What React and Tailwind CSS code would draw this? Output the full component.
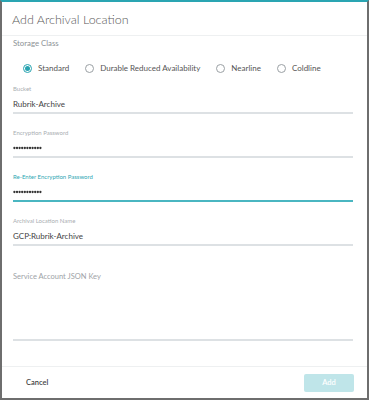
const OPTIONS = ["Standard", "Durable Reduced Availability", "Nearline", "Coldline"];

function Radio({ label, checked }) {
  return (
    <label className="flex items-center gap-[6px] whitespace-nowrap">
      <span
        className={`w-[9px] h-[9px] rounded-full border flex items-center justify-center ${
          checked ? "border-[#27a3b0]" : "border-[#9aa0a4]"
        }`}
      >
        {checked && <span className="w-[5px] h-[5px] rounded-full bg-[#27a3b0]" />}
      </span>
      <span className="text-[8px] text-[#555]">{label}</span>
    </label>
  );
}

function Dots() {
  return (
    <svg width="29" height="4" viewBox="0 0 29 4">
      {Array.from({ length: 11 }).map((_, i) => (
        <circle key={i} cx={1.4 + i * 2.6} cy="2" r="1.15" fill="#333" />
      ))}
    </svg>
  );
}

function Field({ label, value, active, password, className = "mt-[13px]" }) {
  return (
    <div className={className}>
      <div
        className={`h-[10px] flex items-center text-[6px] ${
          active ? "text-[#2fa7b4]" : "text-[#a9aeb2]"
        }`}
      >
        {label}
      </div>
      <div
        className={`mt-[3px] h-[18px] flex items-center border-b-2 ${
          active ? "border-[#4ab6c1]" : "border-[#dde1e4]"
        }`}
      >
        {password ? <Dots /> : <span className="text-[8px] text-[#444]">{value}</span>}
      </div>
    </div>
  );
}

export default function App() {
  return (
    <div
      className="w-[369px] h-[400px] bg-white flex flex-col border-x-2 border-b-2 border-[#6e6e6e] border-t-2 border-t-[#2aa5b2]"
      style={{ fontFamily: "Lato, 'Open Sans', sans-serif" }}
    >
      {/* Header */}
      <div className="h-[34px] shrink-0 flex items-center pt-[3px] px-[10px] border-b border-[#eef0f1]">
        <h1 className="text-[12.5px] font-light text-[#5a5a5a]">Add Archival Location</h1>
      </div>

      {/* Body */}
      <div className="flex-1 pl-[11px] pr-[14px]">
        <div className="mt-[2px] h-[12px] flex items-center text-[7.8px] text-[#8d9296]">
          Storage Class
        </div>
        <div className="mt-[12px] h-[12px] flex items-center gap-[16px] pl-[10px]">
          {OPTIONS.map((o, i) => (
            <Radio key={o} label={o} checked={i === 0} />
          ))}
        </div>

        <Field label="Bucket" value="Rubrik-Archive" className="mt-[9px]" />
        <Field label="Encryption Password" password />
        <Field label="Re-Enter Encryption Password" password active />
        <Field label="Archival Location Name" value="GCP:Rubrik-Archive" />

        <div className="mt-[25px] h-[70px] border-b-2 border-[#dde1e4]">
          <div className="h-[12px] flex items-center text-[7.5px] text-[#9ea3a7]">
            Service Account JSON Key
          </div>
        </div>
      </div>

      {/* Footer */}
      <div className="h-[32px] shrink-0 flex items-center justify-between pl-[24px] pr-[13px] border-t border-[#eef0f1]">
        <button className="text-[7.5px] font-semibold text-[#444]">Cancel</button>
        <button className="w-[50px] h-[18px] rounded-[2px] bg-[#bfe5e9] text-[7.5px] font-semibold text-white">
          Add
        </button>
      </div>
    </div>
  );
}
